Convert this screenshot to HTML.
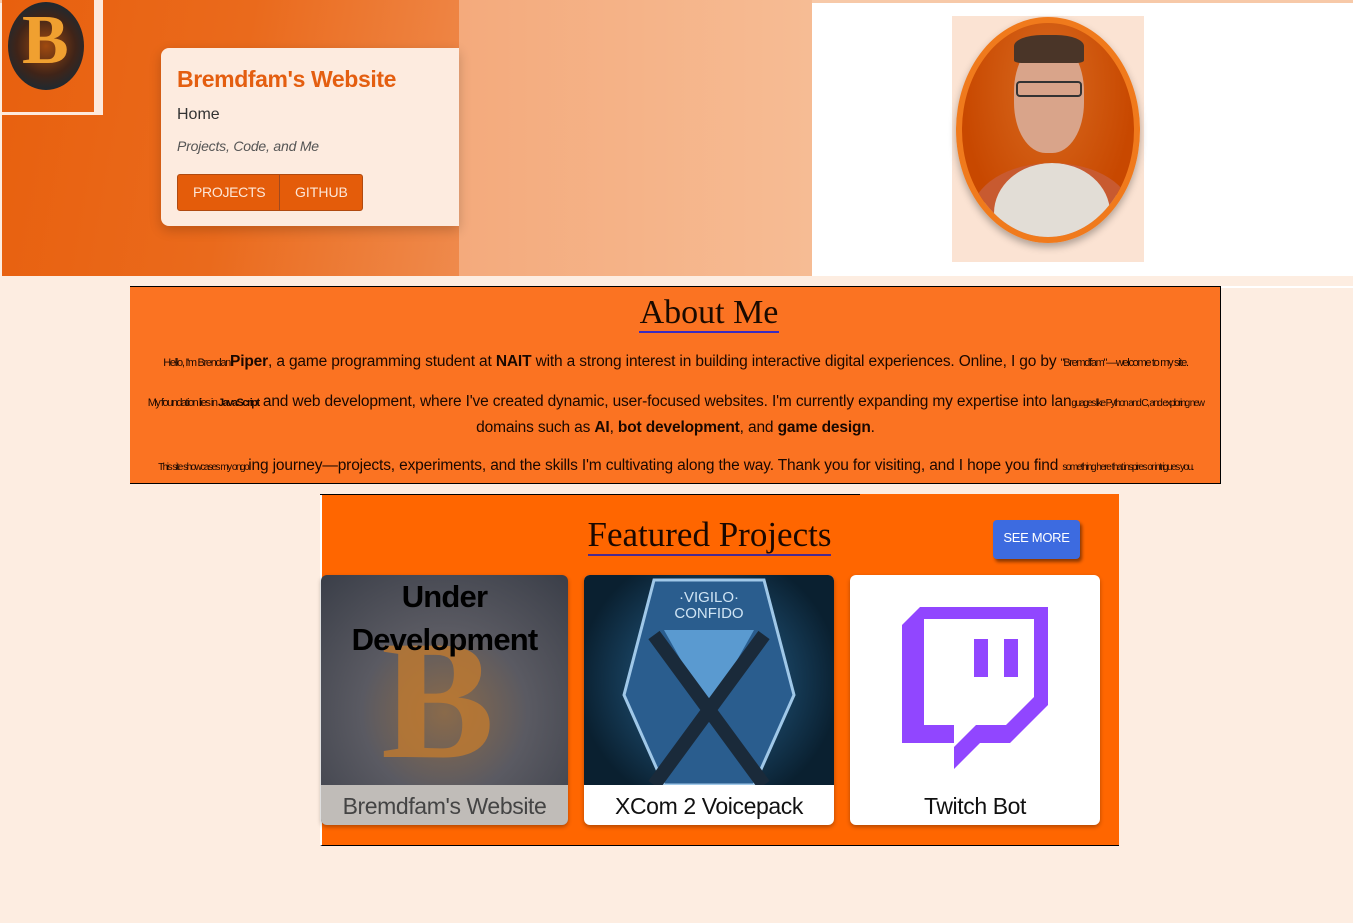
<!DOCTYPE html>
<html><head><style>
*{margin:0;padding:0;box-sizing:border-box}
body{width:1353px;height:923px;background:#fdede1;font-family:"Liberation Sans",sans-serif;position:relative;overflow:hidden}
.a{position:absolute}
</style></head><body>
<div class="a" style="left:0;top:0;width:1353px;height:3px;background:#f7c9a8"></div>
<div class="a" style="left:2px;top:0;width:457px;height:276px;background:linear-gradient(100deg,#e8600e 0%,#ea6a1c 50%,#ef8a4c 100%)"></div>
<div class="a" style="left:459px;top:0;width:353px;height:276px;background:linear-gradient(90deg,#f4aa7c,#f6bc94)"></div>
<div class="a" style="left:812px;top:3px;width:541px;height:273px;background:#fff"></div>
<div class="a" style="left:952px;top:16px;width:192px;height:246px;background:#fbe3d3"></div>
<div class="a" style="left:956px;top:17px;width:184px;height:226px;border-radius:50%;border:6px solid #f07a1c;overflow:hidden;background:radial-gradient(ellipse at 50% 30%,#d86a20 0,#c84800 70%);box-shadow:0 4px 8px rgba(0,0,0,.3)">
<div class="a" style="left:10px;top:140px;width:160px;height:100px;border-radius:50% 50% 0 0;background:#e2ddd6;border-left:22px solid #c85a30;border-right:22px solid #c85a30"></div>
<div class="a" style="left:52px;top:18px;width:70px;height:112px;border-radius:45%;background:#d9a48a"></div>
<div class="a" style="left:52px;top:12px;width:70px;height:28px;border-radius:40% 40% 10% 10%;background:#4a3528"></div>
<div class="a" style="left:54px;top:58px;width:66px;height:16px;border:2px solid #333;border-radius:4px"></div>
</div>
<div class="a" style="left:2px;top:0;width:101px;height:115px;border-right:9px solid #fde9dc;border-bottom:3px solid #fde9dc"></div>
<div class="a" style="left:8px;top:2px;width:76px;height:88px;border-radius:50%;background:radial-gradient(circle,#a04a10 0,#402418 50%,#1a2a34 80%)"></div>
<div class="a" style="left:22px;top:6px;font:bold 70px 'Liberation Serif',serif;color:#f0a030;line-height:1">B</div>
<div class="a" style="left:161px;top:48px;width:298px;height:178px;background:#fdebdf;border-radius:8px 0 0 8px;box-shadow:0 4px 12px rgba(0,0,0,.2)"></div>
<div class="a" style="left:177px;top:66px;font-weight:bold;font-size:23px;letter-spacing:-0.4px;color:#e45e10">Bremdfam's Website</div>
<div class="a" style="left:177px;top:106px;font-size:16px;color:#333">Home</div>
<div class="a" style="left:177px;top:138px;font-size:14px;font-style:italic;color:#555;letter-spacing:-0.2px">Projects, Code, and Me</div>
<div class="a" style="left:177px;top:174px;width:186px;height:37px;background:#e45c0a;border:1px solid #b04a10;border-radius:3px;color:#fde7d8;font-size:14px;line-height:35px">
<span class="a" style="left:15px;letter-spacing:-0.3px">PROJECTS</span><span class="a" style="left:101px;top:0;height:35px;border-left:1px solid #a04a20"></span><span class="a" style="left:117px">GITHUB</span></div>

<div class="a" style="left:130px;top:286px;width:1091px;height:198px;background:#fb7322;border-top:1px solid #000;border-bottom:1px solid #000;border-right:1px solid #000"></div>
<div class="a" style="left:1221px;top:286px;width:132px;height:2px;background:#fff"></div>
<div class="a" style="left:609px;top:294px;width:200px;text-align:center"><span style="font:34px 'Liberation Serif',serif;color:#1a0a00;border-bottom:2px solid #3a2cc0;padding:0 1px">About Me</span></div>
<div class="a" style="left:130px;top:350px;width:1091px;text-align:center;font-size:15.5px;color:#1a0800;line-height:24px;letter-spacing:-0.15px">
<span style="font-size:11px;letter-spacing:-1.3px">Hello, I'm Brendan</span><b>Piper</b>, a game programming student at <b>NAIT</b> with a strong interest in building interactive digital experiences. Online, I go by <span style="font-size:11px;letter-spacing:-1.3px">"Bremdfam"—welcome to my site.</span></div>
<div class="a" style="left:130px;top:390px;width:1091px;text-align:center;font-size:15.5px;color:#1a0800;line-height:24px;letter-spacing:-0.15px">
<span style="font-size:11px;letter-spacing:-1.5px">My foundation lies in <b>JavaScript</b></span> and web development, where I've created dynamic, user-focused websites. I'm currently expanding my expertise into lan<span style="font-size:10px;letter-spacing:-1.6px">guages like Python and C, and exploring new</span><br>domains such as <b>AI</b>, <b>bot development</b>, and <b>game design</b>.</div>
<div class="a" style="left:130px;top:454px;width:1091px;text-align:center;font-size:15.5px;color:#1a0800;line-height:24px;letter-spacing:-0.15px">
<span style="font-size:10px;letter-spacing:-1.5px">This site showcases my ongo</span>ing journey—projects, experiments, and the skills I'm cultivating along the way. Thank you for visiting, and I hope you find <span style="font-size:10px;letter-spacing:-1.5px">something here that inspires or intrigues you.</span></div>

<div class="a" style="left:320px;top:494px;width:799px;height:352px;background:#ff6600;border-bottom:1px solid #000;border-left:2px solid #fff"></div>
<div class="a" style="left:320px;top:494px;width:540px;height:1px;background:#000"></div>
<div class="a" style="left:320px;top:515px;width:779px;text-align:center"><span style="font:35px 'Liberation Serif',serif;color:#1a0800;border-bottom:2px solid #4a2a90">Featured Projects</span></div>
<div class="a" style="left:993px;top:520px;width:87px;height:39px;background:#3d6be0;border-radius:4px;box-shadow:2px 3px 3px rgba(0,0,0,.45);color:#fff;font-size:13px;line-height:36px;text-align:center;letter-spacing:-0.3px">SEE MORE</div>

<div class="a" style="left:321px;top:575px;width:247px;height:250px;border-radius:6px;overflow:hidden;background:radial-gradient(circle at 50% 55%,#8a6a4a 0,#5a5a62 45%,#3a3e48 100%);box-shadow:0 2px 4px rgba(0,0,0,.3)">
<div class="a" style="left:60px;top:40px;font:bold 170px 'Liberation Serif',serif;color:#c07a30;opacity:.8;line-height:1">B</div>
<div class="a" style="left:0;top:0;width:247px;text-align:center;font-weight:bold;font-size:31px;line-height:43px;letter-spacing:-0.8px;color:#000">Under<br>Development</div>
<div class="a" style="left:0;top:210px;width:247px;height:40px;background:#c0bcb8;color:#444;font-size:23px;text-align:center;line-height:42px;letter-spacing:-0.4px">Bremdfam's Website</div></div>

<div class="a" style="left:584px;top:575px;width:250px;height:250px;border-radius:6px;overflow:hidden;background:#fff;box-shadow:0 2px 4px rgba(0,0,0,.3)">
<div class="a" style="left:0;top:0;width:250px;height:210px;background:radial-gradient(circle at 50% 50%,#2a6a9a,#0a2030 80%)"></div>
<svg class="a" style="left:0;top:0" width="250" height="210"><polygon points="70,5 180,5 210,120 170,210 80,210 40,120" fill="#2a5d8e" stroke="#a0c8e8" stroke-width="3"/><polygon points="80,55 170,55 125,135" fill="#5a9ad0"/><path d="M70,60 L180,210 M180,60 L70,210" stroke="#1a2a3a" stroke-width="14"/><text x="125" y="27" fill="#cfe4f4" font-size="15" text-anchor="middle" font-family="Liberation Sans">·VIGILO·</text><text x="125" y="43" fill="#cfe4f4" font-size="15" text-anchor="middle" font-family="Liberation Sans">CONFIDO</text></svg>
<div class="a" style="left:0;top:210px;width:250px;height:40px;color:#111;font-size:23px;text-align:center;line-height:42px;letter-spacing:-0.4px">XCom 2 Voicepack</div></div>

<div class="a" style="left:850px;top:575px;width:250px;height:250px;border-radius:6px;overflow:hidden;background:#fff;box-shadow:0 2px 4px rgba(0,0,0,.3)">
<svg class="a" style="left:52px;top:30px" width="148" height="172" viewBox="0 0 148 172"><path d="M18,2 H146 V100 L108,138 H78 L52,164 V138 H0 V20 Z" fill="#9146ff"/><path d="M22,14 H132 V92 L104,120 H74 L52,142 V120 H22 Z" fill="#fff"/><rect x="72" y="34" width="14" height="38" fill="#9146ff"/><rect x="102" y="34" width="14" height="38" fill="#9146ff"/></svg>
<div class="a" style="left:0;top:210px;width:250px;height:40px;color:#111;font-size:23px;text-align:center;line-height:42px;letter-spacing:-0.4px">Twitch Bot</div></div>
</body></html>
